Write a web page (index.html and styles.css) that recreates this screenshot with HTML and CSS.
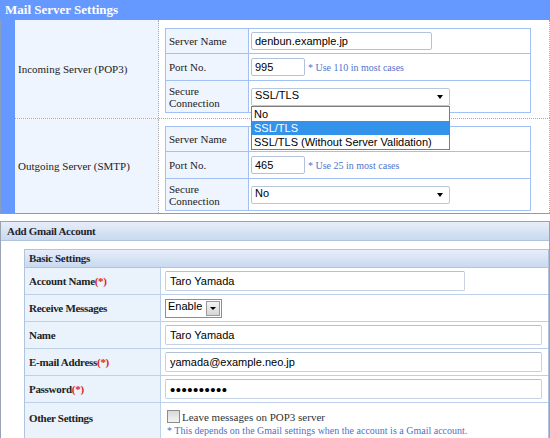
FILE: index.html
```html
<!DOCTYPE html>
<html lang="en">
<head>
    <meta charset="UTF-8">
    <title>Mail Server Settings</title>
    <link rel="stylesheet" href="styles.css">
</head>
<body>
    <section class="server">
        <h2 class="server-title">Mail Server Settings</h2>
        <div class="server-body">
            <div class="server-row">
                <div class="server-name">Incoming Server (POP3)</div>
                <div class="server-detail">
                    <table class="detail">
                        <tr class="row-host">
                            <th>Server Name</th>
                            <td><input class="text host" type="text" value="denbun.example.jp"></td>
                        </tr>
                        <tr class="row-port">
                            <th>Port No.</th>
                            <td><input class="text port" type="text" value="995"><span class="hint">* Use 110 in most cases</span></td>
                        </tr>
                        <tr class="row-secure">
                            <th>Secure<br>Connection</th>
                            <td>
                                <div class="pick">SSL/TLS
                                    <ul class="pick-list">
                                        <li>No</li>
                                        <li class="on">SSL/TLS</li>
                                        <li>SSL/TLS (Without Server Validation)</li>
                                    </ul>
                                </div>
                            </td>
                        </tr>
                    </table>
                </div>
            </div>
            <div class="server-row">
                <div class="server-name">Outgoing Server (SMTP)</div>
                <div class="server-detail">
                    <table class="detail">
                        <tr class="row-host">
                            <th>Server Name</th>
                            <td></td>
                        </tr>
                        <tr class="row-port">
                            <th>Port No.</th>
                            <td><input class="text port" type="text" value="465"><span class="hint">* Use 25 in most cases</span></td>
                        </tr>
                        <tr class="row-secure">
                            <th>Secure<br>Connection</th>
                            <td><div class="pick">No</div></td>
                        </tr>
                    </table>
                </div>
            </div>
        </div>
    </section>

    <section class="account">
        <h2 class="account-title">Add Gmail Account</h2>
        <div class="account-body">
            <div class="group">
                <h3 class="group-title">Basic Settings</h3>
                <table class="fields">
                    <tr>
                        <th>Account Name<span class="req">(*)</span></th>
                        <td><input class="field short" type="text" value="Taro Yamada"></td>
                    </tr>
                    <tr>
                        <th>Receive Messages</th>
                        <td><div class="combo">Enable<span class="combo-btn"></span></div></td>
                    </tr>
                    <tr>
                        <th>Name</th>
                        <td><input class="field" type="text" value="Taro Yamada"></td>
                    </tr>
                    <tr>
                        <th>E-mail Address<span class="req">(*)</span></th>
                        <td><input class="field" type="text" value="yamada@example.neo.jp"></td>
                    </tr>
                    <tr>
                        <th>Password<span class="req">(*)</span></th>
                        <td><input class="field secret" type="password" value="abcdefghij"></td>
                    </tr>
                    <tr class="row-other">
                        <th>Other Settings</th>
                        <td>
                            <label class="keep"><span class="check"></span>Leave messages on POP3 server</label>
                            <p class="note">* This depends on the Gmail settings when the account is a Gmail account.</p>
                        </td>
                    </tr>
                </table>
            </div>
        </div>
    </section>
</body>
</html>
```

FILE: styles.css
```css
body {
    margin: 0;
    width: 550px;
    overflow: hidden;
    font-family: "Liberation Serif", "Times New Roman", serif;
    font-size: 11px;
    color: #222;
    background-color: #fff;
}

/* mail server block */
.server-title {
    margin: 0;
    height: 20px;
    line-height: 20px;
    padding-left: 5px;
    background-color: #6699ff;
    color: #fff;
    font-size: 13px;
    font-weight: bold;
}
.server-body {
    background-color: #6699ff;
    padding-left: 14px;
    border-left: 1px solid #8a9cc0;
    border-bottom: 1px solid #999;
}
.server-row {
    display: flex;
    background-color: #fff;
    border-right: 1px dotted #aaa;
}
.server-row + .server-row {
    border-top: 1px dotted #aaa;
}
.server-name {
    width: 140px;
    padding-left: 3px;
    background-color: #eef5ff;
    border-right: 1px dotted #aaa;
    display: flex;
    align-items: center;
}
.server-detail {
    flex: 1;
    padding: 8px 0 5px 6px;
}
.server-row + .server-row .server-detail {
    padding: 7px 0 2px 6px;
}
.detail {
    width: 366px;
    border-collapse: collapse;
}
.detail th, .detail td {
    border: 1px solid #a3c0f5;
    padding: 0;
}
.detail th {
    width: 79px;
    padding-left: 3px;
    text-align: left;
    font-weight: normal;
    line-height: 12px;
    background-color: #eef5ff;
}
.detail td {
    padding-left: 2px;
}
.row-host th { height: 24px; }
.row-port th { height: 26px; }
.row-secure th { height: 31px; }

.text {
    box-sizing: border-box;
    height: 18px;
    padding: 0 3px;
    border: 1px solid #b3c2dc;
    border-radius: 2px;
    font: 11px "Liberation Sans", Arial, sans-serif;
    color: #000;
    vertical-align: middle;
}
.host { width: 181px; }
.port { width: 54px; }
.hint {
    margin-left: 3px;
    font-size: 10px;
    color: #5272cc;
    vertical-align: middle;
}

.pick {
    position: relative;
    box-sizing: border-box;
    width: 199px;
    height: 18px;
    line-height: 16px;
    padding-left: 3px;
    border: 1px solid #b9c6dc;
    border-radius: 2px;
    font: 11px "Liberation Sans", Arial, sans-serif;
    color: #000;
}
.pick::after {
    content: "";
    position: absolute;
    right: 6px;
    top: 6px;
    border-left: 3px solid transparent;
    border-right: 3px solid transparent;
    border-top: 4px solid #000;
}
.pick-list {
    position: absolute;
    left: -1px;
    top: 17px;
    width: 197px;
    margin: 0;
    padding: 0;
    list-style: none;
    background-color: #fff;
    border: 1px solid #7d7d7d;
    z-index: 2;
}
.pick-list li {
    height: 14px;
    line-height: 14px;
    padding-left: 2px;
}
.pick-list li.on {
    background-color: #3393ea;
    color: #fff;
}

/* gmail account block */
.account {
    margin-top: 7px;
    border: 1px solid #98a4b4;
    border-bottom: 0;
}
.account-title, .group-title {
    margin: 0;
    font-size: 11px;
    font-weight: bold;
    letter-spacing: -0.3px;
    color: #1e2430;
    background: linear-gradient(#e7eef9, #c9d9ef);
}
.account-title {
    height: 18px;
    line-height: 18px;
    padding-left: 6px;
    border-bottom: 1px solid #b0c2dc;
}
.account-body {
    padding: 8px 0 0 23px;
}
.group {
    border: 1px solid #b0c4de;
    border-bottom: 0;
}
.group-title {
    height: 17px;
    line-height: 17px;
    padding-left: 4px;
    border-bottom: 1px solid #b0c4de;
}
.fields {
    width: 100%;
    border-collapse: collapse;
}
.fields th, .fields td {
    padding: 0;
    border-bottom: 1px solid #bcd0ea;
}
.fields th {
    width: 131px;
    height: 26px;
    padding-left: 4px;
    text-align: left;
    letter-spacing: -0.3px;
    background-color: #eaf2fc;
    border-right: 1px solid #bcd0ea;
}
.fields td {
    padding-left: 4px;
}
.req {
    color: #e02020;
}

.field {
    box-sizing: border-box;
    width: 377px;
    height: 20px;
    padding: 0 4px;
    border: 1px solid #c6d1e2;
    border-top-color: #b3bfd2;
    border-radius: 2px;
    font: 11px "Liberation Sans", Arial, sans-serif;
    color: #000;
    vertical-align: middle;
}
.short { width: 300px; }
.secret {
    font-size: 15px;
    letter-spacing: 0.5px;
}

.combo {
    position: relative;
    box-sizing: border-box;
    width: 57px;
    height: 19px;
    line-height: 17px;
    padding-left: 2px;
    border: 1px solid #8d8d8d;
    font: 11px "Liberation Sans", Arial, sans-serif;
    color: #000;
}
.combo-btn {
    position: absolute;
    right: 1px;
    top: 1px;
    width: 12px;
    height: 13px;
    border: 1px solid #9a9a9a;
    background: linear-gradient(#f4f4f4, #d6d6d6);
}
.combo-btn::after {
    content: "";
    position: absolute;
    left: 3px;
    top: 5px;
    border-left: 3px solid transparent;
    border-right: 3px solid transparent;
    border-top: 3px solid #000;
}

.row-other th {
    vertical-align: top;
    padding-top: 9px;
    height: auto;
}
.row-other td {
    padding-top: 7px;
    padding-bottom: 6px;
}
.keep {
    display: flex;
    align-items: center;
    color: #333;
}
.check {
    display: inline-block;
    width: 11px;
    height: 11px;
    margin: 0 2px 0 2px;
    border: 1px solid #8c8c8c;
    background: linear-gradient(#d8d8d8, #f4f4f4);
}
.note {
    margin: 2px 0 0 2px;
    font-size: 10px;
    color: #4f6fcc;
}
```
